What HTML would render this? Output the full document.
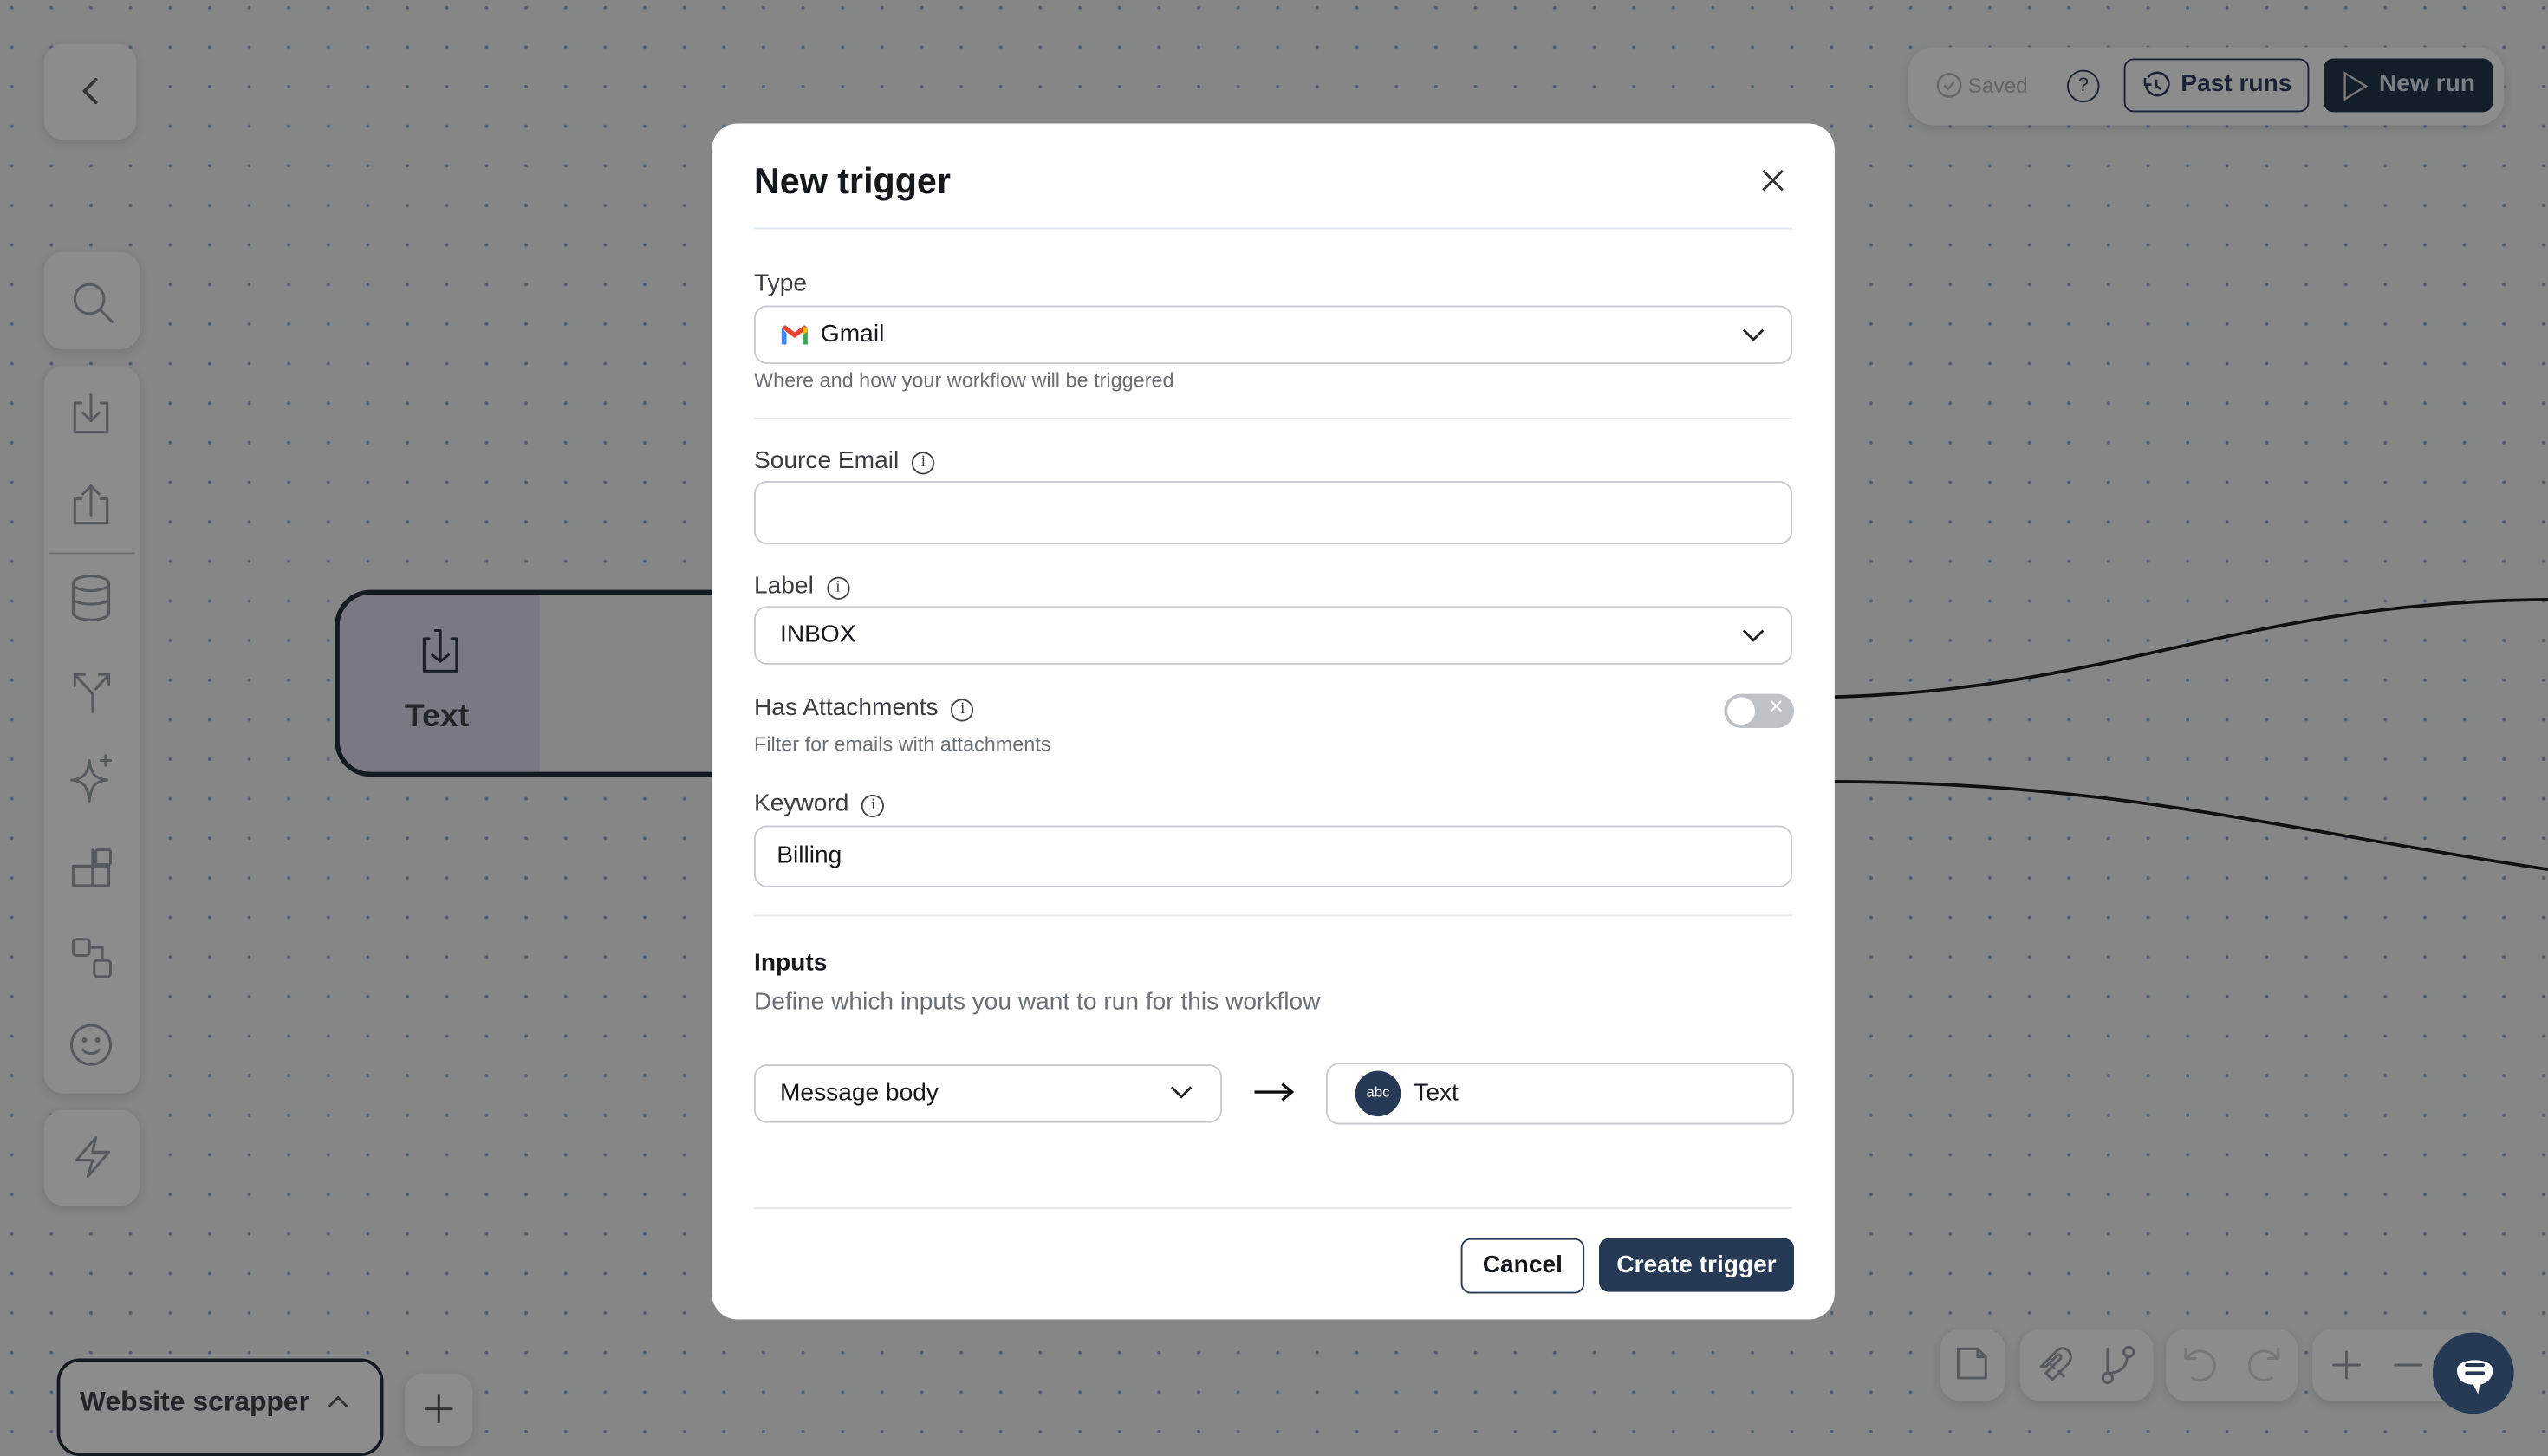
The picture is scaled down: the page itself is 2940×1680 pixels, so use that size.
<!DOCTYPE html>
<html><head><meta charset="utf-8"><style>
*{box-sizing:border-box;margin:0;padding:0}
html,body{width:2940px;height:1664px;overflow:hidden;background:#858786}
#w{position:absolute;left:0;top:0;width:1568px;height:887.5px;transform:scale(1.875);transform-origin:0 0;font-family:"Liberation Sans",sans-serif;
background-color:#858786;background-image:radial-gradient(circle,#4c5d72 0.9px,transparent 1.2px);background-size:24.35px 24.35px;background-position:-4.9px -7.5px}
.ab{position:absolute}
.pn{position:absolute;background:#8b8c8c;border-radius:12px;box-shadow:0 2px 6px rgba(0,0,0,.12)}
svg.i{position:absolute;fill:none;stroke:#555a5f;stroke-width:1.6;stroke-linecap:round;stroke-linejoin:round}
.m{position:absolute;left:438px;top:76px;width:691px;height:736px;background:#fff;border-radius:16px}
.lb{position:absolute;left:26px;font-size:15px;color:#3a3d42}
.in{position:absolute;left:26px;width:639px;border:1.5px solid #c9cace;border-radius:8px;font-size:15px;color:#15181c}
.hp{position:absolute;left:26px;font-size:12.5px;color:#6b6f76}
.hr{position:absolute;left:26px;width:639px;height:1px;background:#e4e8ec}
.inf{display:inline-block;width:14px;height:14px;border:1.2px solid #444;border-radius:50%;font-size:10px;text-align:center;line-height:12px;margin-left:8px;vertical-align:1px;font-family:"Liberation Serif",serif}
</style></head><body><div id="w">
<!-- right curves -->
<svg class="ab" style="left:0;top:0" width="1568" height="887"><path d="M1125 429 C1300 425 1380 370 1568 369" stroke="#111" stroke-width="2" fill="none"/><path d="M1125 481 C1300 481 1400 510 1568 535" stroke="#111" stroke-width="2" fill="none"/></svg>
<!-- back -->
<div class="pn" style="left:27px;top:27px;width:57px;height:59px"></div>
<svg class="i" style="left:46px;top:46px" width="20" height="20"><path d="M13 3 L6 10 L13 17" stroke="#333" stroke-width="2"/></svg>
<!-- tools -->
<div class="pn" style="left:27px;top:155px;width:59px;height:60px"></div>
<svg class="i" style="left:42px;top:171px" width="30" height="30"><circle cx="13" cy="13" r="9"/><path d="M20 20 L27 27"/></svg>
<div class="pn" style="left:27px;top:225px;width:59px;height:448px;border-radius:12px"></div>
<div class="ab" style="left:30px;top:340px;width:53px;height:1px;background:#6f7272"></div>
<svg class="i" style="left:40px;top:240px" width="32" height="30"><path d="M10 8 H6 V26 H26 V8 H22 M16 3 V19 M11 14 L16 19 L21 14"/></svg>
<svg class="i" style="left:40px;top:295px" width="32" height="30"><path d="M10 12 H6 V27 H26 V12 H22 M16 22 V4 M11 9 L16 4 L21 9"/></svg>
<svg class="i" style="left:42px;top:352px" width="30" height="32"><ellipse cx="14" cy="7" rx="11" ry="4.5"/><path d="M3 7 V25 C3 31 25 31 25 25 V7 M3 16 C3 21 25 21 25 16"/></svg>
<svg class="i" style="left:40px;top:408px" width="32" height="32"><path d="M17 30 V19 L6 7 M6 7 V14 M6 7 H12 M19 16 L27 7 M27 7 V13 M27 7 H21"/></svg>
<svg class="i" style="left:40px;top:462px" width="32" height="34"><path d="M15 6 C16 14 18 17 26 18 C18 19 16 22 15 31 C14 22 12 19 4 18 C12 17 14 14 15 6Z M25 3 V9 M22 6 H28"/></svg>
<svg class="i" style="left:42px;top:520px" width="30" height="30"><rect x="3" y="13" width="12" height="12"/><rect x="15" y="13" width="10" height="12"/><rect x="3" y="4" width="12" height="9" style="display:none"/><rect x="17" y="3" width="9" height="9" rx="1"/><path d="M3 13 H15 V3"/></svg>
<svg class="i" style="left:42px;top:575px" width="30" height="30"><rect x="3" y="3" width="10" height="10" rx="2"/><rect x="16" y="16" width="10" height="10" rx="2"/><path d="M13 8 H21 V16"/></svg>
<svg class="i" style="left:41px;top:628px" width="30" height="30"><circle cx="15" cy="15" r="12"/><path d="M10 18 C12 21 18 21 20 18"/><circle cx="11" cy="12" r=".8"/><circle cx="19" cy="12" r=".8"/></svg>
<div class="pn" style="left:27px;top:683px;width:59px;height:59px"></div>
<svg class="i" style="left:42px;top:697px" width="30" height="30"><path d="M17 3 L5 17 H15 L12 27 L25 12 H15 Z"/></svg>
<!-- node -->
<div class="ab" style="left:206px;top:363px;width:260px;height:115px;border:3px solid #141a22;border-radius:22px;overflow:hidden;background:#858786"><div style="width:123px;height:100%;background:#7a7882"></div></div>
<svg class="i" style="left:254px;top:386px;stroke:#1a1f2a" width="32" height="30"><path d="M10 7 H7 V27 H27 V7 H24 M14 2 H17 V21 M12 17 L17 21 L22 17"/></svg>
<div class="ab" style="left:249px;top:430px;font-size:20px;font-weight:bold;color:#22252a">Text</div>
<!-- top right -->
<div class="pn" style="left:1174px;top:29px;width:367px;height:48px;border-radius:16px"></div>
<svg class="ab" style="left:1191px;top:44px" width="18" height="18"><circle cx="8.5" cy="8.5" r="7" stroke="#666" fill="none" stroke-width="1.3"/><path d="M5.5 8.5 L7.8 10.8 L11.5 6.5" stroke="#666" fill="none" stroke-width="1.3"/></svg>
<div class="ab" style="left:1211px;top:45px;font-size:13px;color:#666">Saved</div>
<div class="ab" style="left:1272px;top:43px;width:20px;height:20px;border:1.5px solid #1a2333;border-radius:50%;font-size:12px;text-align:center;line-height:17px;color:#1a2333">?</div>
<div class="ab" style="left:1307px;top:36px;width:114px;height:33px;border:1.5px solid #1a2333;border-radius:6px"></div>
<svg class="ab" style="left:1317px;top:43px" width="20" height="20"><path d="M3 5 V9 H7 M3.6 9 A7 7 0 1 0 5 4.5 M10 6 V10 L13 12" stroke="#1a2333" fill="none" stroke-width="1.4"/></svg>
<div class="ab" style="left:1342px;top:43px;font-size:15px;font-weight:bold;color:#1a2333">Past runs</div>
<div class="ab" style="left:1430px;top:36px;width:104px;height:33px;background:#141e2b;border-radius:6px"></div>
<svg class="ab" style="left:1441px;top:43px" width="18" height="20"><path d="M2 2 L15 10 L2 18 Z" stroke="#777" fill="none" stroke-width="1.3"/></svg>
<div class="ab" style="left:1464px;top:43px;font-size:15px;font-weight:bold;color:#7a7f86">New run</div>
<!-- bottom left -->
<div class="ab" style="left:35px;top:836px;width:201px;height:60px;border:2px solid #141a22;border-radius:14px;background:#8b8c8c"></div>
<div class="ab" style="left:49px;top:853px;font-size:17px;font-weight:bold;color:#22252a">Website scrapper</div>
<svg class="i" style="left:200px;top:855px;stroke:#333" width="16" height="14"><path d="M3 10 L8 5 L13 10"/></svg>
<div class="pn" style="left:249px;top:845px;width:42px;height:45px"></div>
<svg class="i" style="left:259px;top:856px;stroke:#333" width="22" height="22"><path d="M11 3 V19 M3 11 H19"/></svg>
<!-- bottom right -->
<div class="pn" style="left:1194px;top:818px;width:40px;height:44px"></div>
<div class="pn" style="left:1243px;top:818px;width:82px;height:44px"></div>
<div class="pn" style="left:1333px;top:818px;width:81px;height:44px"></div>
<div class="pn" style="left:1423px;top:818px;width:110px;height:44px"></div>
<svg class="i" style="left:1202px;top:827px" width="24" height="24"><path d="M3 3 H15 L20 8 V21 H3 Z M15 3 V8 H20"/></svg>
<svg class="i" style="left:1252px;top:827px" width="26" height="26"><path d="M4 14 L14 4 C19 0 25 6 21 12 L11 22 L7 18 L16 9 C17 7 15 6 14 7 L7 14 Z M9 12 L12 15 M15 17 L18 20"/></svg>
<svg class="i" style="left:1292px;top:827px" width="24" height="26"><path d="M5 3 V18 M5 18 C13 18 17 14 17 7"/><circle cx="5" cy="21" r="3"/><circle cx="18" cy="5" r="3"/></svg>
<svg class="i" style="left:1341px;top:827px;stroke:#777" width="26" height="26"><path d="M4 3 V9 H10 M5 9 A9 9 0 1 1 8 21"/></svg>
<svg class="i" style="left:1380px;top:827px;stroke:#777" width="26" height="26"><path d="M22 3 V9 H16 M21 9 A9 9 0 1 0 18 21"/></svg>
<svg class="i" style="left:1432px;top:828px" width="24" height="24"><path d="M12 4 V20 M4 12 H20"/></svg>
<svg class="i" style="left:1470px;top:828px" width="24" height="24"><path d="M4 12 H20"/></svg>
<div class="ab" style="left:1497px;top:820px;width:50px;height:50px;border-radius:50%;background:#263a55"></div>
<svg class="ab" style="left:1508px;top:830px" width="30" height="32"><path d="M4 13 C4 5 26 5 26 13 C26 20 20 22 18 22 L17 28 L14 22 C9 22 4 20 4 13Z" fill="#fff"/><path d="M10 10 H20 M10 15 H20" stroke="#263a55" stroke-width="2.2" stroke-linecap="round"/></svg>
<!-- modal -->
<div class="m">
<div class="ab" style="left:26px;top:23px;font-size:22px;font-weight:bold;color:#15181c">New trigger</div>
<svg class="ab" style="left:645px;top:27px" width="16" height="16"><path d="M2 2 L14 14 M14 2 L2 14" stroke="#333" stroke-width="1.6"/></svg>
<div class="hr" style="top:64px;background:#dce8f2"></div>
<div class="lb" style="top:90px">Type</div>
<div class="in" style="top:112px;height:36px"></div>
<svg class="ab" style="left:42px;top:123px" width="18" height="14"><path d="M1 3 V13 H4 V6 Z" fill="#4285f4"/><path d="M14 6 V13 H17 V3 Z" fill="#34a853"/><path d="M1 3 L9 9 L17 3 L15 1 L9 5.5 L3 1 Z" fill="#ea4335"/><path d="M14 2 L17 3 V5 L14 7Z" fill="#fbbc04"/></svg>
<div class="ab" style="left:67px;top:121px;font-size:15px;color:#15181c">Gmail</div>
<svg class="ab" style="left:633px;top:124px" width="16" height="12"><path d="M2 3 L8 9 L14 3" stroke="#222" fill="none" stroke-width="1.5"/></svg>
<div class="hp" style="top:151px">Where and how your workflow will be triggered</div>
<div class="hr" style="top:181px"></div>
<div class="lb" style="top:199px">Source Email<span class="inf">i</span></div>
<div class="in" style="top:220px;height:39px"></div>
<div class="lb" style="top:276px">Label<span class="inf">i</span></div>
<div class="in" style="top:297px;height:36px;padding:8px 15px">INBOX</div>
<svg class="ab" style="left:633px;top:309px" width="16" height="12"><path d="M2 3 L8 9 L14 3" stroke="#222" fill="none" stroke-width="1.5"/></svg>
<div class="lb" style="top:351px">Has Attachments<span class="inf">i</span></div>
<div class="ab" style="left:623px;top:351px;width:43px;height:21px;border-radius:11px;background:#bfc2c6"></div>
<div class="ab" style="left:625px;top:353px;width:17px;height:17px;border-radius:50%;background:#fff"></div>
<div class="ab" style="left:650px;top:352px;font-size:12px;color:#fff">✕</div>
<div class="hp" style="top:375px">Filter for emails with attachments</div>
<div class="lb" style="top:410px">Keyword<span class="inf">i</span></div>
<div class="in" style="top:432px;height:38px;padding:9px 13px">Billing</div>
<div class="hr" style="top:487px"></div>
<div class="lb" style="top:508px;font-weight:bold;color:#15181c">Inputs</div>
<div class="lb" style="top:532px;color:#6b6f76">Define which inputs you want to run for this workflow</div>
<div class="in" style="top:579px;width:288px;height:36px;padding:8px 15px">Message body</div>
<svg class="ab" style="left:281px;top:590px" width="16" height="12"><path d="M2 3 L8 9 L14 3" stroke="#222" fill="none" stroke-width="1.5"/></svg>
<svg class="ab" style="left:333px;top:589px" width="26" height="14"><path d="M1 7 H24 M18 2 L24 7 L18 12" stroke="#111" fill="none" stroke-width="1.8"/></svg>
<div class="in" style="left:378px;top:578px;width:288px;height:38px"></div>
<div class="ab" style="left:396px;top:583px;width:28px;height:28px;border-radius:50%;background:#263a55;color:#fff;font-size:9px;text-align:center;line-height:26px">abc</div>
<div class="ab" style="left:432px;top:588px;font-size:15px;color:#15181c">Text</div>
<div class="hr" style="top:667px"></div>
<div class="ab" style="left:461px;top:686px;width:76px;height:34px;border:1.5px solid #263a55;border-radius:6px;font-size:15px;font-weight:bold;color:#15181c;text-align:center;line-height:31px">Cancel</div>
<div class="ab" style="left:546px;top:686px;width:120px;height:33px;background:#263a55;border-radius:6px;font-size:15px;font-weight:bold;color:#fff;text-align:center;line-height:33px">Create trigger</div>
</div>
</div></body></html>
